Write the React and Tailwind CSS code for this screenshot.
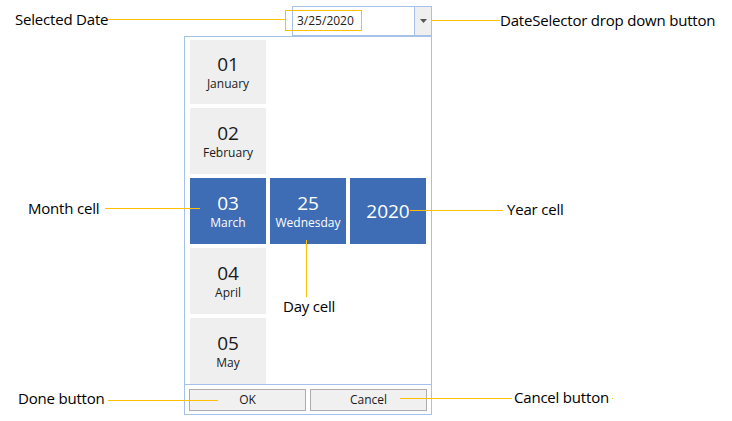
import React from "react";

const font = { fontFamily: '"Open Sans", "Noto Sans", sans-serif' };

function MonthCell({ num, name, h = "h-[66px]" }) {
  return (
    <div className={`w-[76px] ${h} bg-[#efefef] flex flex-col items-center justify-center text-[#1a1a1a]`}>
      <div className="text-[19px] leading-[22px]">{num}</div>
      <div className="text-[12px] leading-[16px] mt-[1px]">{name}</div>
    </div>
  );
}

function BlueCell({ children }) {
  return (
    <div className="w-[76px] h-[66px] bg-[#3e6db5] flex flex-col items-center justify-center text-white">
      {children}
    </div>
  );
}

function HLine({ className }) {
  return <div className={`absolute z-10 h-px bg-[#ffc000] ${className}`} />;
}

function Label({ className, children }) {
  return (
    <div className={`absolute text-[15px] leading-[20px] text-black tracking-[-0.2px] whitespace-nowrap ${className}`}>
      {children}
    </div>
  );
}

export default function App() {
  return (
    <div className="relative w-[732px] h-[421px] bg-white overflow-hidden" style={font}>
      <div className="pl-[184px] pt-[6px]">
        {/* combo box */}
        <div className="ml-[108px] w-[140px] h-[30px] border border-[#a5c1e8] flex">
          <div className="flex-1 flex items-center pl-[4px] text-[12px] text-[#222]">3/25/2020</div>
          <div className="w-[17px] h-full bg-[#efefef] border-l border-[#a5c1e8] flex items-center justify-center">
            <svg width="7" height="4" viewBox="0 0 7 4"><path d="M0 0H7L3.5 4Z" fill="#555" /></svg>
          </div>
        </div>
        {/* popup */}
        <div className="w-[248px] h-[379px] border border-[#a5c1e8] flex flex-col">
          <div className="h-[347px] overflow-hidden pl-[5px] pr-[5px] pt-[3px] flex flex-col gap-[4px]">
            <MonthCell num="01" name="January" h="h-[64px] shrink-0" />
            <MonthCell num="02" name="February" h="h-[66px] shrink-0" />
            <div className="flex gap-[4px] shrink-0">
              <BlueCell>
                <div className="text-[19px] leading-[22px]">03</div>
                <div className="text-[12px] leading-[16px] mt-[1px]">March</div>
              </BlueCell>
              <BlueCell>
                <div className="text-[19px] leading-[22px]">25</div>
                <div className="text-[12px] leading-[16px] mt-[1px]">Wednesday</div>
              </BlueCell>
              <BlueCell>
                <div className="text-[19px] leading-[22px]">2020</div>
              </BlueCell>
            </div>
            <MonthCell num="04" name="April" h="h-[66px] shrink-0" />
            <MonthCell num="05" name="May" h="h-[66px] shrink-0" />
          </div>
          <div className="border-t border-[#a5c1e8] flex gap-[4px] pl-[4px] pt-[4px]">
            <button className="w-[117px] h-[22px] bg-[#f0f0f0] border border-[#adadad] text-[12px] text-[#1a1a1a] flex items-center justify-center">OK</button>
            <button className="w-[117px] h-[22px] bg-[#f0f0f0] border border-[#adadad] text-[12px] text-[#1a1a1a] flex items-center justify-center">Cancel</button>
          </div>
        </div>
      </div>

      {/* callouts */}
      <div className="absolute z-10 left-[285px] top-[10px] w-[77px] h-[21px] border border-[#ffc000]" />
      <Label className="left-[15px] top-[9px]">Selected Date</Label>
      <HLine className="left-[108px] top-[19px] w-[177px]" />

      <HLine className="left-[432px] top-[20px] w-[68px]" />
      <Label className="left-[500px] top-[10px]">DateSelector drop down button</Label>

      <Label className="left-[28px] top-[198px]">Month cell</Label>
      <HLine className="left-[105px] top-[208px] w-[95px]" />

      <HLine className="left-[410px] top-[210px] w-[93px]" />
      <Label className="left-[507px] top-[199px]">Year cell</Label>

      <div className="absolute z-10 left-[306px] top-[240px] w-px h-[57px] bg-[#ffc000]" />
      <Label className="left-[283px] top-[296px]">Day cell</Label>

      <Label className="left-[18px] top-[388px]">Done button</Label>
      <HLine className="left-[108px] top-[400px] w-[110px]" />

      <HLine className="left-[400px] top-[398px] w-[112px]" />
      <Label className="left-[514px] top-[387px]">Cancel button</Label>
      <div className="absolute z-10 left-[612px] top-[398px] w-px h-px bg-[#ffc000]" />
    </div>
  );
}
